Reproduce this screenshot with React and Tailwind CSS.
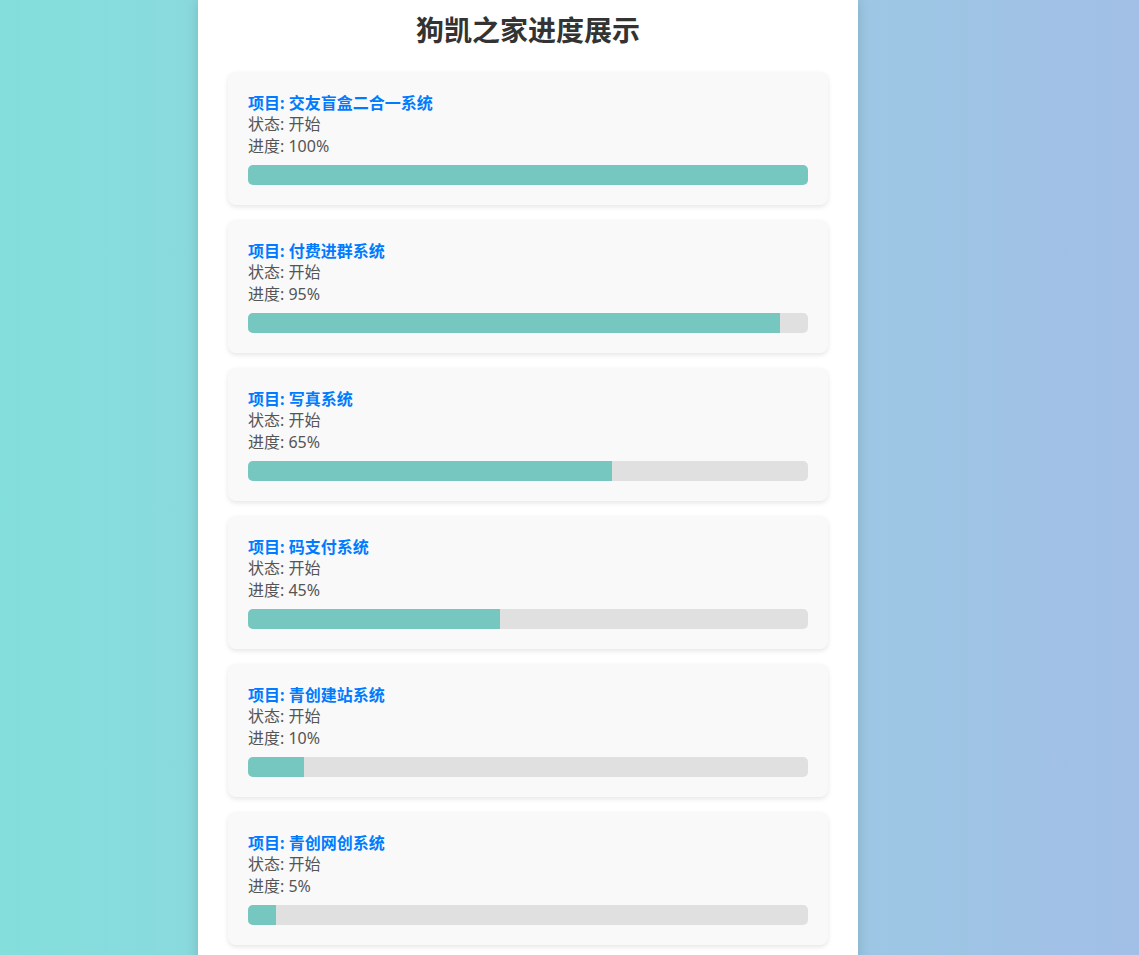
const PROJECTS = [
    { name: '交友盲盒二合一系统', status: '开始', progress: 100 },
    { name: '付费进群系统', status: '开始', progress: 95 },
    { name: '写真系统', status: '开始', progress: 65 },
    { name: '码支付系统', status: '开始', progress: 45 },
    { name: '青创建站系统', status: '开始', progress: 10 },
    { name: '青创网创系统', status: '开始', progress: 5 },
];

/* 项目卡片 */
const ProjectCard = ({ project }) => (
    <div className="bg-[#f9f9f9] rounded-lg p-5 shadow-[0_2px_5px_rgba(0,0,0,0.1)]">
        <h3 className="text-[16px] leading-[22px] font-bold text-[#007bff]">项目: {project.name}</h3>
        <p className="text-[16px] leading-[21.5px] text-[#555]">状态: {project.status}</p>
        <p className="text-[16px] leading-[21.5px] text-[#555]">进度: {project.progress}%</p>
        <div className="mt-2 h-5 bg-[#e0e0e0] rounded-[5px] overflow-hidden">
            <div className="h-full bg-[#76c7c0]" style={{ width: `${project.progress}%` }} />
        </div>
    </div>
);

const App = () => {
    return (
        <div className="min-h-screen bg-gradient-to-r from-[#83dfdb] to-[#a2bfe6] font-['Segoe_UI','Noto_Sans','Noto_Sans_CJK_SC',sans-serif]">
            <div className="ml-[198px] w-[660px] min-h-screen bg-white px-[30px] pt-3 pb-8 shadow-[0_0_12px_rgba(0,0,0,0.15)]">
                <h1 className="text-center text-[28px] leading-9 font-bold text-[#333] mb-6">狗凯之家进度展示</h1>
                <div className="flex flex-col gap-[15px]">
                    {PROJECTS.map(project => (
                        <ProjectCard key={project.name} project={project} />
                    ))}
                </div>
            </div>
        </div>
    );
};

export default App;
